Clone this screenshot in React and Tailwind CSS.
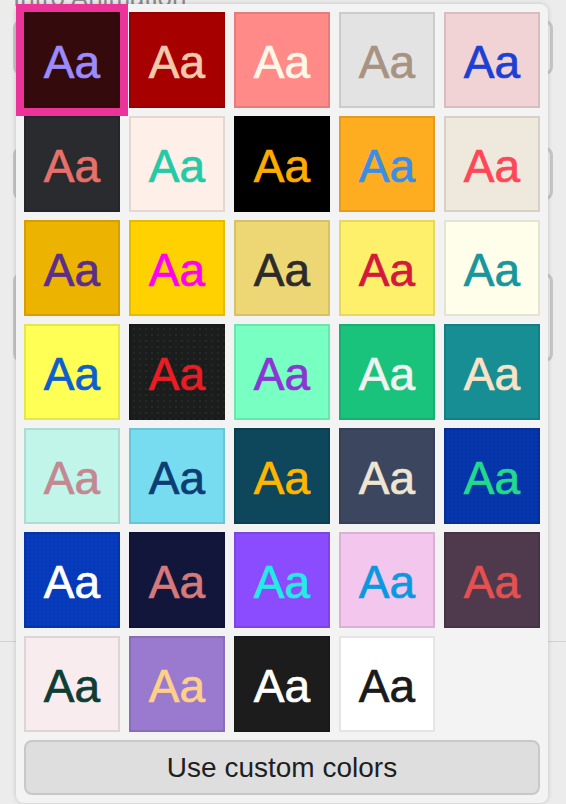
import React from 'react';

const themes = [
  { id: 'maroon', cls: 'bg-[#350a0c] text-[#9b8bff]' },
  { id: 'crimson', cls: 'bg-[#a60000] text-[#f3c9ae]' },
  { id: 'salmon', cls: 'bg-[#ff8a88] text-[#fff8e8]' },
  { id: 'silver', cls: 'bg-[#e3e3e3] text-[#a89282]' },
  { id: 'blush', cls: 'bg-[#f1d3d5] text-[#1c3fd4]' },

  { id: 'charcoal', cls: 'bg-[#2a2b2e] text-[#e8706a]' },
  { id: 'linen', cls: 'bg-[#fef0e8] text-[#25c9a5]' },
  { id: 'black', cls: 'bg-[#000000] text-[#ffac00]' },
  { id: 'tangerine', cls: 'bg-[#ffad20] text-[#3a8ee6]' },
  { id: 'sand', cls: 'bg-[#efe8dc] text-[#ff4656]' },

  { id: 'mustard', cls: 'bg-[#ecb300] text-[#5b2d8c]' },
  { id: 'sun', cls: 'bg-[#ffd100] text-[#ff00f0]' },
  { id: 'wheat', cls: 'bg-[#ecd774] text-[#2b2b2b]' },
  { id: 'lemon', cls: 'bg-[#fff06b] text-[#d31a3c]' },
  { id: 'cream', cls: 'bg-[#fffeeb] text-[#16979b]' },

  { id: 'neon', cls: 'bg-[#ffff55] text-[#0c5fce]' },
  { id: 'night', cls: 'bg-[#1b1c1c] text-[#eb1c24] bg-[radial-gradient(circle,#262727_0.7px,transparent_1px)] bg-[length:6px_6px]' },
  { id: 'mint', cls: 'bg-[#78ffc2] text-[#8b35d4]' },
  { id: 'emerald', cls: 'bg-[#1ac37c] text-[#f2f2f2]' },
  { id: 'teal', cls: 'bg-[#168e93] text-[#fbe2c6]' },

  { id: 'aqua', cls: 'bg-[#c1f5ea] text-[#c38891]' },
  { id: 'sky', cls: 'bg-[#77dcf0] text-[#0c3d73]' },
  { id: 'ocean', cls: 'bg-[#0e465b] text-[#ffb600]' },
  { id: 'slate', cls: 'bg-[#3c475f] text-[#eee5d3]' },
  { id: 'cobalt', cls: 'bg-[#0434a8] text-[#23d98b] bg-[radial-gradient(circle,#0738b0_0.7px,transparent_1px)] bg-[length:4px_4px]' },

  { id: 'royal', cls: 'bg-[#0639b8] text-[#ffffff] bg-[radial-gradient(circle,#0a3ec2_0.7px,transparent_1px)] bg-[length:4px_4px]' },
  { id: 'navy', cls: 'bg-[#12163a] text-[#d6797a]' },
  { id: 'violet', cls: 'bg-[#8b4bff] text-[#22ece3]' },
  { id: 'orchid', cls: 'bg-[#f3c6ee] text-[#0a99e0]' },
  { id: 'plum', cls: 'bg-[#4e3a4c] text-[#e55050]' },

  { id: 'rose', cls: 'bg-[#f8ecee] text-[#0d3d33]' },
  { id: 'lavender', cls: 'bg-[#9a7acf] text-[#ffd08a]' },
  { id: 'ink', cls: 'bg-[#1b1c1b] text-[#ffffff]' },
  { id: 'paper', cls: 'bg-[#ffffff] text-[#1a1a1a]' },
];

function Swatch({ theme, selected }) {
  return (
    <button
      className={
        'relative flex h-24 items-center justify-center border-2 border-black/10 pt-[4px] text-[46px] leading-none [-webkit-text-stroke:0.7px_currentColor] ' +
        theme.cls +
        (selected ? ' z-10 shadow-[0_0_0_8px_#eb3399]' : '')
      }
    >
      Aa
    </button>
  );
}

export default function App() {
  const selectedId = 'maroon';

  return (
    <div className="relative h-[804px] w-[566px] overflow-hidden bg-[#ececec] font-['Liberation_Sans',Arial,sans-serif]">
      {/* page behind the popover */}
      <div className="flex flex-col px-[13px]">
        <div className="mt-[-18px] text-[26px] leading-[30px] text-[#8a8a8a]">Intro Animation</div>
        <div className="mt-2 h-[55px] rounded-lg border-[3px] border-[#c6c6c6]" />
        <div className="mt-[72px] h-[53px] rounded-lg border-[3px] border-[#c6c6c6]" />
        <div className="mt-[73px] h-[89px] rounded-lg border-[3px] border-[#c6c6c6]" />
      </div>
      <div className="absolute left-0 right-0 top-[641px] h-px bg-[#d2d2d2]" />

      {/* color theme popover */}
      <div className="absolute left-[16px] top-[4px] w-[532px] rounded-lg bg-[#f3f3f3] p-2 shadow-[0_0_5px_rgba(0,0,0,0.18)]">
        <div className="grid grid-cols-5 gap-x-[9px] gap-y-2">
          {themes.map((t) => (
            <Swatch key={t.id} theme={t} selected={t.id === selectedId} />
          ))}
        </div>
        <button className="mt-2 h-[55px] w-full rounded-lg border-2 border-[#c8c8c8] bg-[#dedede] text-[28px] text-[#1f1f1f]">
          Use custom colors
        </button>
      </div>
    </div>
  );
}
